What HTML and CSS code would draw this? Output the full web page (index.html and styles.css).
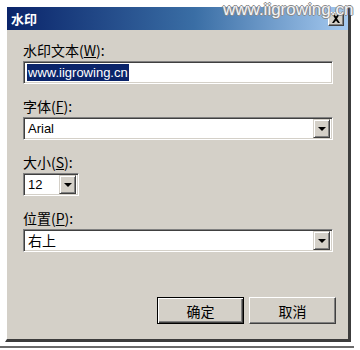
FILE: index.html
```html
<!DOCTYPE html>
<html lang="zh">
<head>
<meta charset="utf-8">
<title>水印</title>
<link rel="stylesheet" href="styles.css">
</head>
<body>
<div class="window">
  <div class="titlebar">
    <span class="title">水印</span>
    <span class="close"><svg width="10" height="9" viewBox="0 0 10 9"><path d="M1 0h2l2 2.5L7 0h2L6 4.5 9 9H7L5 6.5 3 9H1l3-4.5z" fill="#000"/></svg></span>
  </div>
  <div class="body">
    <div class="field">
      <div class="label">水印文本(<u>W</u>):</div>
      <div class="textbox"><span class="sel">www.iigrowing.cn</span></div>
    </div>
    <div class="field">
      <div class="label">字体(<u>F</u>):</div>
      <div class="combo"><span class="value">Arial</span><span class="drop"><span class="arrow"></span></span></div>
    </div>
    <div class="field">
      <div class="label">大小(<u>S</u>):</div>
      <div class="combo small"><span class="value">12</span><span class="drop"><span class="arrow"></span></span></div>
    </div>
    <div class="field">
      <div class="label">位置(<u>P</u>):</div>
      <div class="combo"><span class="value cjk">右上</span><span class="drop"><span class="arrow"></span></span></div>
    </div>
    <div class="buttons">
      <button class="btn default"><span class="face">确定</span></button>
      <button class="btn"><span class="face">取消</span></button>
    </div>
  </div>
</div>
<div class="shadow"></div>
<div class="watermark">www.iigrowing.cn</div>
</body>
</html>
```
FILE: styles.css
```css
html, body {
  margin: 0;
  padding: 0;
  background: #fff;
}
body {
  position: relative;
  width: 360px;
  height: 350px;
  overflow: hidden;
  font-family: "Noto Sans CJK SC", "Liberation Sans", sans-serif;
}
.window {
  margin: 5px 0 0 5px;
  width: 341px;
  border-left: 2px solid #fff;
  border-top: 2px solid #fff;
  border-right: 3px solid #3c3c3c;
  border-bottom: 3px solid #3c3c3c;
  background: #d4d0c8;
}
.titlebar {
  height: 23px;
  display: flex;
  align-items: center;
  justify-content: space-between;
  padding: 0 4px 0 4px;
  background: linear-gradient(to right, #0a246a 0%, #3a6ea5 55%, #a6caf0 100%);
}
.title {
  color: #fff;
  font-weight: bold;
  font-size: 13px;
  line-height: 16px;
}
.close {
  width: 16px;
  height: 14px;
  box-sizing: border-box;
  background: #d4d0c8;
  border: 1px solid;
  border-color: #fff #404040 #404040 #fff;
  box-shadow: inset -1px -1px #808080;
  display: flex;
  align-items: center;
  justify-content: center;
}
.body {
  height: 309px;
  box-sizing: border-box;
  padding: 12px 12px 0 16px;
  display: flex;
  flex-direction: column;
}
.field {
  margin-bottom: 14px;
}
.label {
  font-size: 14px;
  line-height: 16px;
  height: 16px;
  color: #000;
  margin-bottom: 3px;
}
.label u {
  text-decoration-thickness: 1px;
  text-underline-offset: 1px;
}
.textbox, .combo {
  width: 310px;
  height: 23px;
  box-sizing: border-box;
  background: #fff;
  border: 1px solid;
  border-color: #808080 #fff #fff #808080;
  box-shadow: inset 1px 1px #404040, inset -1px -1px #d4d0c8;
  display: flex;
  align-items: center;
  padding: 2px 2px 2px 3px;
  font-family: "Liberation Sans", Arial, sans-serif;
  font-size: 13px;
}
.sel {
  background: #0a246a;
  color: #fff;
  line-height: 17px;
  padding: 0 1px;
}
.combo .value {
  flex: 1;
  padding-left: 1px;
  line-height: 17px;
}
.combo .value.cjk {
  font-family: "Noto Sans CJK SC", sans-serif;
  font-size: 14px;
}
.combo.small {
  width: 56px;
}
.drop {
  width: 17px;
  height: 19px;
  box-sizing: border-box;
  background: #d4d0c8;
  border: 1px solid;
  border-color: #d4d0c8 #404040 #404040 #d4d0c8;
  box-shadow: inset 1px 1px #fff, inset -1px -1px #808080;
  display: flex;
  align-items: center;
  justify-content: center;
}
.arrow {
  width: 0;
  height: 0;
  border-left: 4px solid transparent;
  border-right: 4px solid transparent;
  border-top: 4px solid #000;
  margin-top: 1px;
}
.buttons {
  margin-top: 31px;
  display: flex;
  justify-content: flex-end;
  gap: 5px;
}
.btn {
  width: 87px;
  height: 27px;
  padding: 0;
  margin: 0;
  box-sizing: border-box;
  background: #d4d0c8;
  border: 1px solid;
  border-color: #fff #404040 #404040 #fff;
  box-shadow: inset -1px -1px #808080;
  font-family: "Noto Sans CJK SC", sans-serif;
  font-size: 14px;
  color: #000;
  display: flex;
  align-items: center;
  justify-content: center;
}
.btn.default {
  border: 1px solid #000;
  box-shadow: inset 1px 1px #fff, inset -1px -1px #404040, inset -2px -2px #808080;
}
.face {
  line-height: 16px;
}
.shadow {
  margin-top: 4px;
  width: 354px;
  height: 2px;
  background: #6a6a6a;
}
.watermark {
  position: absolute;
  top: 0;
  left: 223px;
  font-family: "Liberation Sans", Arial, sans-serif;
  font-size: 17px;
  line-height: 20px;
  color: #f2f4f8;
  text-shadow: 1px 0 #8a8a8a, -1px 0 #8a8a8a, 0 1px #8a8a8a, 0 -1px #8a8a8a;
}
```
